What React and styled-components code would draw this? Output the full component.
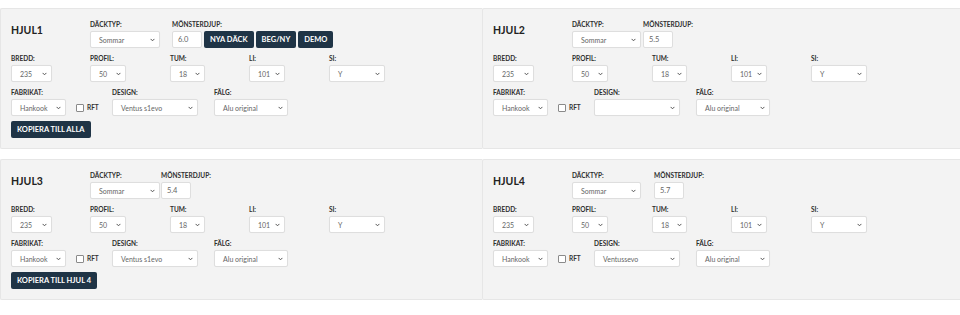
import React from "react";
import styled, { createGlobalStyle } from "styled-components";

const GlobalStyle = createGlobalStyle`
  html, body {
    margin: 0;
    padding: 0;
    background: #fff;
    font-family: Lato, "Open Sans", Arial, sans-serif;
    color: #2b2b2b;
  }
`;

const Page = styled.div`
  width: 960px;
  padding-top: 8px;
  display: grid;
  grid-template-columns: 482px 478px;
  row-gap: 10px;
`;

const Panel = styled.div`
  background: #f3f3f3;
  border: 1px solid #e6e6e6;
  border-right: none;
  border-radius: 2px 0 0 2px;
  padding: 12px 0 10px 10px;
  display: flex;
  flex-direction: column;
`;

const Row = styled.div`
  display: flex;
  align-items: flex-end;
  margin-top: ${p => p.$top || 0}px;
`;

const Title = styled.div`
  width: 79px;
  align-self: flex-start;
  padding-top: 3px;
  font-size: 10.5px;
  font-weight: 700;
  color: #222;
`;

const Field = styled.div`
  display: flex;
  flex-direction: column;
  width: ${p => (p.$w ? `${p.$w}px` : "auto")};
  margin-left: ${p => p.$ml || 0}px;
  flex-shrink: 0;
`;

const Label = styled.div`
  font-size: 6.5px;
  font-weight: 700;
  line-height: 8px;
  height: 8px;
  margin-bottom: 2px;
  color: #2e2e2e;
  text-transform: uppercase;
  white-space: nowrap;
`;

const SelectBox = styled.div`
  width: ${p => p.$w}px;
  height: 17px;
  box-sizing: border-box;
  background: #fff;
  border: 1px solid #dedede;
  border-radius: 2px;
  display: flex;
  align-items: center;
  justify-content: space-between;
  padding: 0 4px 0 8px;
  font-size: 7px;
  color: #666;
  box-shadow: 0 0 1px rgba(0, 0, 0, 0.04);
`;

const InputBox = styled.div`
  width: ${p => p.$w}px;
  height: 17px;
  box-sizing: border-box;
  background: #fff;
  border: 1px solid #dedede;
  border-radius: 2px;
  display: flex;
  align-items: center;
  padding-left: 5px;
  font-size: 7.5px;
  color: #666;
`;

const Buttons = styled.div`
  display: flex;
  gap: 2px;
  margin-left: 2px;
`;

const Button = styled.div`
  height: 17px;
  box-sizing: border-box;
  padding: 0 6px;
  display: flex;
  align-items: center;
  background: #1f3446;
  color: #fff;
  border-radius: 2px;
  font-size: 7.5px;
  font-weight: 700;
  white-space: nowrap;
`;

const BottomButton = styled(Button)`
  align-self: flex-start;
  margin-top: 5px;
`;

const Check = styled.div`
  display: flex;
  align-items: center;
  gap: 3px;
  margin-left: 10px;
  height: 17px;
  font-size: 6.5px;
  font-weight: 700;
  color: #333;
`;

const Box = styled.span`
  width: 6px;
  height: 6px;
  border: 1px solid #8a8a8a;
  border-radius: 1px;
  background: #fff;
`;

function Chevron() {
  return (
    <svg width="5" height="4" viewBox="0 0 5 4">
      <path d="M0.6 0.9 L2.5 2.8 L4.4 0.9" fill="none" stroke="#555" strokeWidth="1" />
    </svg>
  );
}

function Select({ w, value }) {
  return (
    <SelectBox $w={w}>
      <span>{value}</span>
      <Chevron />
    </SelectBox>
  );
}

function Wheel({ name, depth, depthGap, dackW, demoButtons, copyLabel, design }) {
  return (
    <Panel>
      <Row>
        <Title>{name}</Title>
        <Field>
          <Label>Däcktyp:</Label>
          <Select w={dackW} value="Sommar" />
        </Field>
        <Field $ml={depthGap}>
          <Label>Mönsterdjup:</Label>
          <div style={{ display: "flex" }}>
            <InputBox $w={30}>{depth}</InputBox>
            {demoButtons && (
              <Buttons>
                <Button>NYA DÄCK</Button>
                <Button>BEG/NY</Button>
                <Button>DEMO</Button>
              </Buttons>
            )}
          </div>
        </Field>
      </Row>
      <Row $top={7}>
        <Field $w={79}>
          <Label>Bredd:</Label>
          <Select w={41} value="235" />
        </Field>
        <Field $w={80}>
          <Label>Profil:</Label>
          <Select w={36} value="50" />
        </Field>
        <Field $w={79}>
          <Label>Tum:</Label>
          <Select w={35} value="18" />
        </Field>
        <Field $w={80}>
          <Label>LI:</Label>
          <Select w={36} value="101" />
        </Field>
        <Field>
          <Label>SI:</Label>
          <Select w={56} value="Y" />
        </Field>
      </Row>
      <Row $top={7}>
        <Field $w={101}>
          <Label>Fabrikat:</Label>
          <div style={{ display: "flex" }}>
            <Select w={55} value="Hankook" />
            <Check>
              <Box />
              RFT
            </Check>
          </div>
        </Field>
        <Field $w={102}>
          <Label>Design:</Label>
          <Select w={86} value={design} />
        </Field>
        <Field>
          <Label>Fälg:</Label>
          <Select w={74} value="Alu original" />
        </Field>
      </Row>
      {copyLabel && <BottomButton>{copyLabel}</BottomButton>}
    </Panel>
  );
}

export default function App() {
  return (
    <>
      <GlobalStyle />
      <Page>
        <Wheel name="HJUL1" depth="6.0" dackW={70} depthGap={12} demoButtons copyLabel="KOPIERA TILL ALLA" design="Ventus s1evo" />
        <Wheel name="HJUL2" depth="5.5" dackW={69} depthGap={2} design="" />
        <Wheel name="HJUL3" depth="5.4" dackW={70} depthGap={1} copyLabel="KOPIERA TILL HJUL 4" design="Ventus s1evo" />
        <Wheel name="HJUL4" depth="5.7" dackW={69} depthGap={13} design="Ventussevo" />
      </Page>
    </>
  );
}
